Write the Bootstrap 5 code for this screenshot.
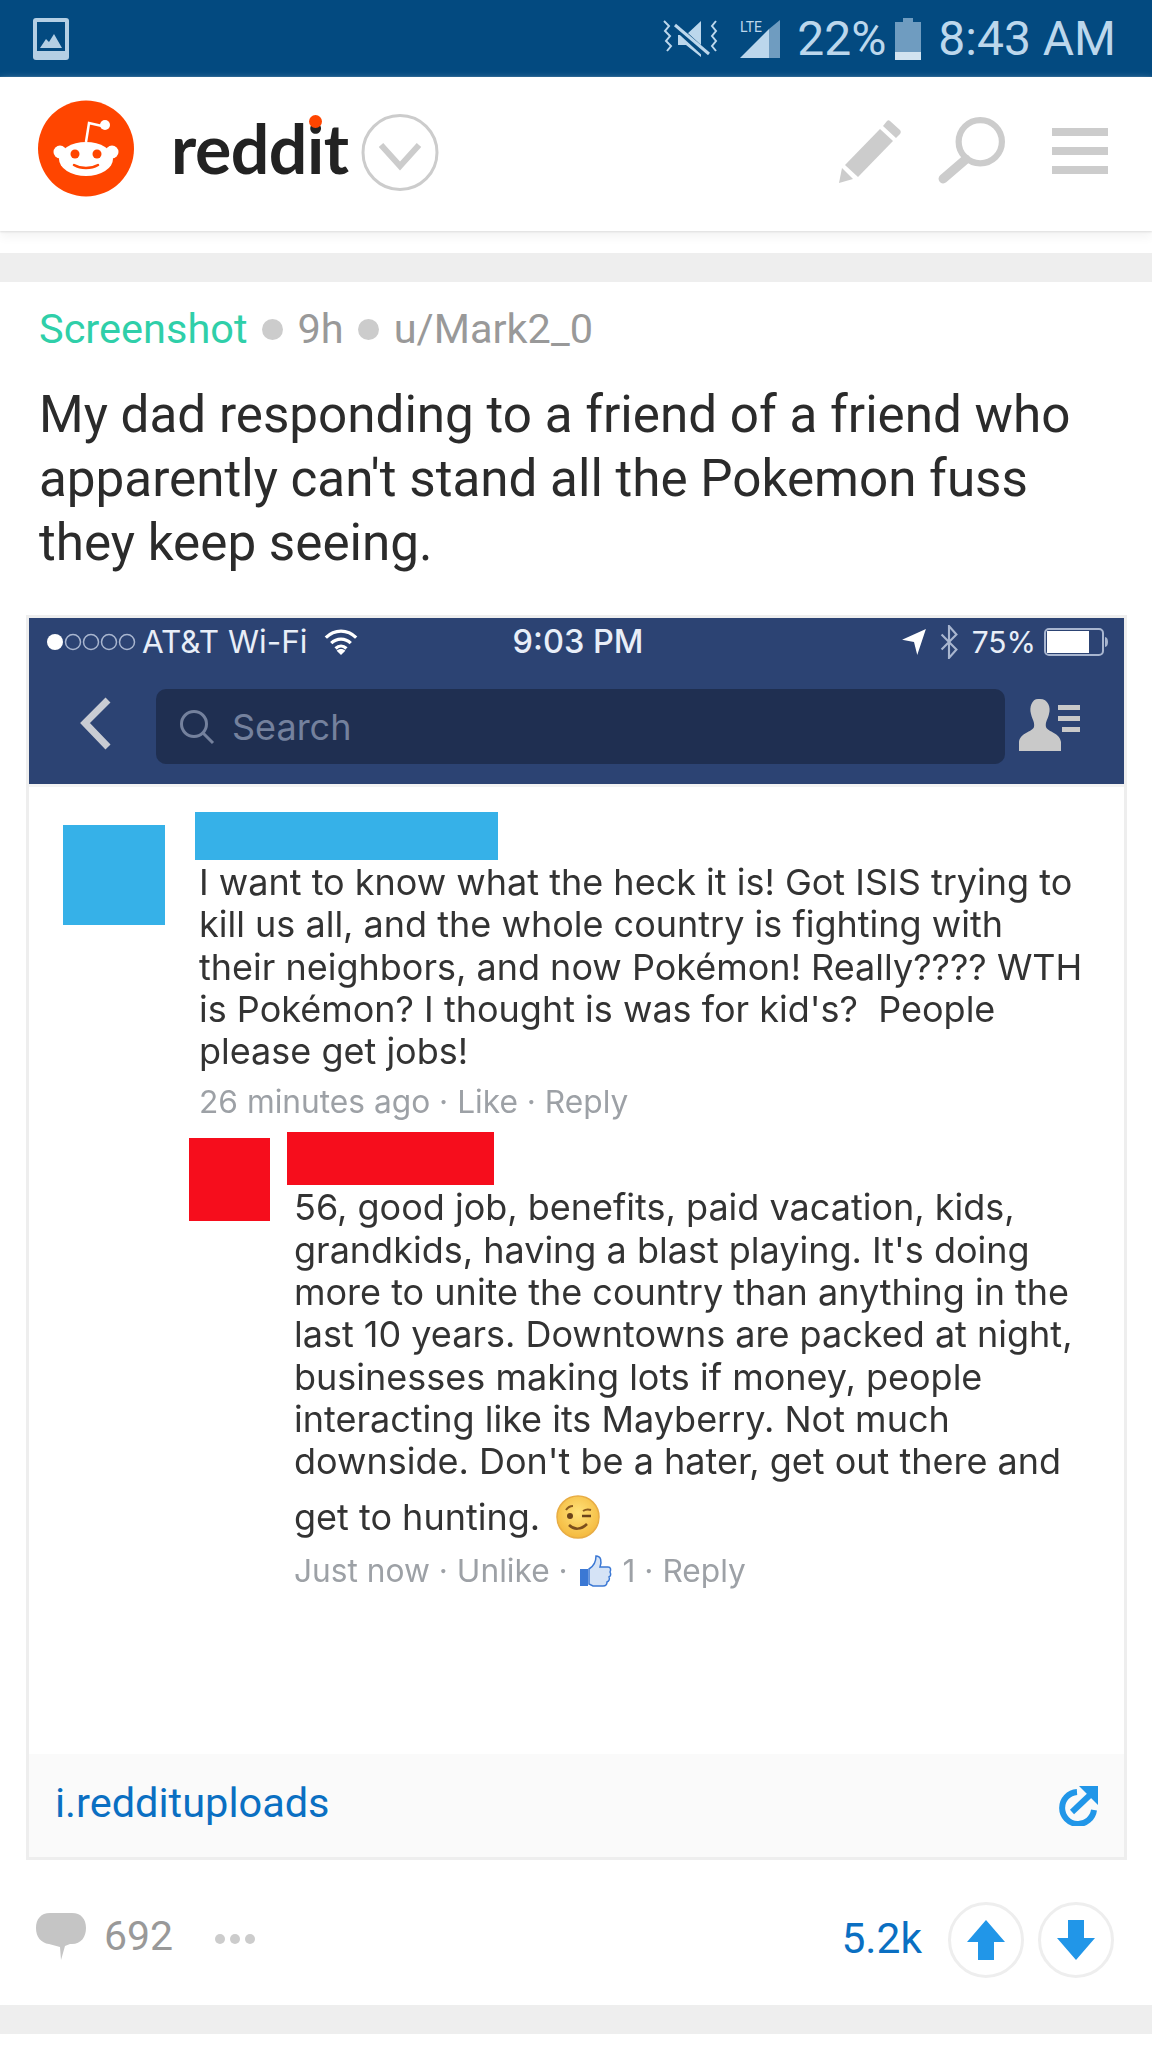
<!doctype html>
<html lang="en">
<head>
<meta charset="utf-8">
<title>reddit post</title>
<link href="https://cdn.jsdelivr.net/npm/bootstrap@5.3.0/dist/css/bootstrap.min.css" rel="stylesheet">
<style>
body{background:#fff;font-family:Roboto,"Liberation Sans",sans-serif;overflow-x:hidden}
.sys-bar{height:77px;background:#034a80;color:#bcd7ec;padding:0 36px 0 33px;font-size:48px;line-height:1}
.sys-icons{gap:17px}
.batt-ic{margin-left:-8px}
.signal-ic{margin-left:3px}
.app-head{height:154px;padding:0 44px 12px 38px;background:#fff;box-shadow:0 1px 2px #ddd,0 6px 10px #f4f4f4}
.wordmark{font-family:Lato,sans-serif;font-weight:700;font-size:68px;line-height:1;color:#222;margin-left:37px;letter-spacing:-.5px;position:relative}
.wm-dot{position:relative}
.wm-dot::after{content:"";position:absolute;left:50%;top:8px;width:13px;height:13px;margin-left:-6.5px;border-radius:50%;background:#ff4500}
.chev{margin-left:13px;margin-top:8px}
.head-tools{margin-top:6px}
.tool-search{margin:0 47px 0 36px}
.band{height:29px;background:#eee}
.gap-top{height:22px}
.post-meta{padding:23px 39px 0;font-size:41.500px;line-height:48px;color:#999;gap:14.500px}
.flair{color:#2fcfa9}
.sep{width:21px;height:21px;border-radius:50%;background:#ccc}
.post-title{margin:30px 39px 0;font-size:51.200px;line-height:64px;font-weight:400;color:#2b2b2b}
.shot-card{margin:40px 25px 0 26px;border:3px solid #eee;background:#fff}
.fb-bar{background:#2c4373;height:166px;color:#e8eef8;font-family:Inter,"Liberation Sans",sans-serif}
.fb-status{height:48px;padding:0 14px 0 17px;font-size:31.500px;line-height:1}
.fb-side{flex:1 1 0}
.fb-clock{font-size:32.500px;font-weight:500}
.fb-pct{font-size:30px;margin:0 8px 0 12px}
.fb-bt{margin-left:12px}
.fb-nav{padding:23px 0 0 50px}
.fb-search{width:849px;height:75px;margin-left:45px;background:#1f2f51;border-radius:10px;color:#74819d;font-size:36px;padding-left:23px;gap:17px}
.fb-person{margin-left:13px;margin-top:8px}
.fb-wrap{height:970px;padding-top:25px;border-top:3px solid #f3f3f3;font-family:Inter,"Liberation Sans",sans-serif;color:#333;filter:blur(.5px)}
.avatar-a{width:102px;height:100px;background:#36b1e8;margin:13px 0 0 34px;flex:none}
.name-a{width:303px;height:48px;background:#36b1e8;margin-left:-1px}
.c-text{font-size:36px;line-height:42.3px;margin:0}
.c-meta{font-size:31.700px;line-height:40px;color:#9da1a6;margin:0}
.body-a{margin-left:31px;width:900px}
.body-a .c-text{margin:1px 0 0 3px}
.body-a .c-meta{margin:10px 0 0 3px}
.reply-row{margin:10px 0 0 160px}
.avatar-b{width:81px;height:83px;background:#f60d1c;margin-top:6px;flex:none}
.name-b{width:207px;height:53px;background:#f60d1c}
.body-b{margin-left:17px;width:800px}
.body-b .c-text{margin:0 0 0 7px}
.body-b .c-text.first{margin-top:1px}
.body-b .c-last{margin:12px 0 0 7px;font-size:36px;line-height:42px;gap:16px}
.body-b .c-meta{margin:12px 0 0 7px}
.wink{width:44px;height:44px}
.like-ic{vertical-align:-5px;margin:0 2px}
.link-strip{height:103px;background:#fafafa;padding:0 26px 0 26px;color:#0a6fc2;font-size:41.500px}
.link-label{margin-bottom:5px}
.action-row{height:144.500px;padding:8px 38px 0 36px}
.count-a{font-size:41px;color:#999;margin-left:18px}
.dots-more{margin-left:42px;gap:5px;margin-top:6px}
.dots-more i{display:block;width:10px;height:10px;border-radius:50%;background:#ccc}
.count-b{font-size:42.500px;color:#0a6fc2;margin-right:12px;margin-top:6px}
.vote{width:76px;height:76px;border:3px solid #eee;border-radius:50%;margin-left:14px;margin-top:8px}
</style>
</head>
<body>
<div class="sys-bar d-flex align-items-center justify-content-between">
  <svg width="36" height="42" viewBox="0 0 36 42"><rect width="36" height="42" rx="3" fill="#b4cfe4"/><rect x="4" y="4" width="28" height="29" fill="#034a80"/><path d="M7 30l6-9 3 3 5-8 8 14z" fill="#b4cfe4"/></svg>
  <div class="sys-icons d-flex align-items-center">
    <svg width="58" height="42" viewBox="0 0 58 42"><path d="M2 3l5 5-4 5 5 5-4 5 5 5-4 5M54 3l-4 5 4 5-4 5 4 5-4 5 4 5" fill="none" stroke="#bcd7ec" stroke-width="2"/><path d="M16 17h8L39 3v36L24 27h-8z" fill="#bcd7ec"/><path d="M11 6l36 33" stroke="#034a80" stroke-width="7"/><path d="M13 7l34 29" stroke="#bcd7ec" stroke-width="3"/></svg>
    <svg class="signal-ic" width="40" height="42" viewBox="0 0 40 42"><path d="M40 2v38H29V11z" fill="#6f9cc0"/><path d="M29 11v29H0z" fill="#bcd7ec"/><text x="0" y="14" font-size="14" fill="#bcd7ec" font-family="Roboto,sans-serif">LTE</text></svg>
    <span>22%</span>
    <svg class="batt-ic" width="26" height="42" viewBox="0 0 26 42"><rect x="8" width="10" height="5" fill="#6f9cc0"/><rect y="4" width="26" height="38" fill="#6f9cc0"/><rect y="34" width="26" height="8" fill="#d2e3f0"/></svg>
    <span>8:43 AM</span>
  </div>
</div>

<div class="app-head d-flex align-items-center justify-content-between">
  <div class="d-flex align-items-center">
    <svg width="96" height="97" viewBox="0 0 96 97"><circle cx="48" cy="48.500" r="48" fill="#ff4500"/><circle cx="22" cy="52" r="6.500" fill="#fff"/><circle cx="74" cy="52" r="6.500" fill="#fff"/><ellipse cx="48" cy="59" rx="27" ry="17" fill="#fff"/><path d="M48 42l3-19 13 3" fill="none" stroke="#fff" stroke-width="2.500"/><circle cx="67" cy="25" r="5" fill="#fff"/><circle cx="37" cy="54" r="4.500" fill="#ff4500"/><circle cx="59" cy="54" r="4.500" fill="#ff4500"/><path d="M36 65c7 4 17 4 24 0" fill="none" stroke="#ff4500" stroke-width="2.500" stroke-linecap="round"/></svg>
    <span class="wordmark">redd<span class="wm-dot">i</span>t</span>
    <svg class="chev" width="78" height="79" viewBox="0 0 78 79"><circle cx="39" cy="39.500" r="37" fill="none" stroke="#ccc" stroke-width="3"/><path d="M20 32l19 21 19-21" fill="none" stroke="#ccc" stroke-width="6"/></svg>
  </div>
  <div class="head-tools d-flex align-items-center">
    <svg width="62" height="63" viewBox="0 0 62 63"><path d="M51 1l10 9c1 1 1 3 0 4l-4 4-13-12 4-5c1-1 2-1 3 0z" fill="#ccc"/><path d="M41 9l13 12-35 36-13-12z" fill="#ccc"/><path d="M3 48l11 11-14 4z" fill="#ccc"/></svg>
    <svg class="tool-search" width="68" height="68" viewBox="0 0 66 66"><circle cx="42" cy="24" r="21" fill="none" stroke="#ccc" stroke-width="6"/><path d="M28 41L6 60" stroke="#ccc" stroke-width="9" stroke-linecap="round"/></svg>
    <svg width="56" height="46" viewBox="0 0 56 46"><path d="M0 0h56v8H0zM0 19h56v8H0zM0 38h56v8H0z" fill="#ccc"/></svg>
  </div>
</div>
<div class="gap-top"></div>
<div class="band"></div>

<div class="post-meta d-flex align-items-center">
  <span class="flair">Screenshot</span><span class="sep"></span><span>9h</span><span class="sep"></span><span>u/Mark2_0</span>
</div>
<h1 class="post-title">My dad responding to a friend of a friend who apparently can't stand all the Pokemon fuss they keep seeing.</h1>

<div class="shot-card">
  <div class="fb-bar">
    <div class="fb-status d-flex align-items-center justify-content-between">
      <div class="fb-side d-flex align-items-center">
        <svg width="92" height="18" viewBox="0 0 92 18"><circle cx="9" cy="9" r="8" fill="#fff"/><g fill="none" stroke="#a9b6cf" stroke-width="1.500"><circle cx="27" cy="9" r="7.500"/><circle cx="45" cy="9" r="7.500"/><circle cx="63" cy="9" r="7.500"/><circle cx="81" cy="9" r="7.500"/></g></svg>
        <span class="ms-1">AT&amp;T Wi-Fi</span>
        <svg class="ms-3" width="36" height="26" viewBox="0 0 32 24"><path d="M2 8c8-8 20-8 28 0M7 13c5-5 13-5 18 0M11 18c3-3 7-3 10 0" fill="none" stroke="#fff" stroke-width="3"/><path d="M16 24l-4-4c2-2 6-2 8 0z" fill="#fff"/></svg>
      </div>
      <span class="fb-clock">9:03 PM</span>
      <div class="fb-side d-flex align-items-center justify-content-end">
        <svg width="24" height="26" viewBox="0 0 22 24"><path d="M22 0L0 10l11 2 3 12z" fill="#fff"/></svg>
        <svg class="fb-bt" width="22" height="34" viewBox="0 0 20 32"><path d="M3 9l14 14-7 8V1l7 8L3 23" fill="none" stroke="#a9b6cf" stroke-width="2"/></svg>
        <span class="fb-pct">75%</span>
        <svg width="66" height="28" viewBox="0 0 66 28"><rect x="1" y="1" width="58" height="26" rx="4" fill="none" stroke="#a9b6cf" stroke-width="2"/><rect x="3" y="3" width="42" height="22" fill="#fff"/><path d="M61 9c4 0 4 10 0 10z" fill="#a9b6cf"/></svg>
      </div>
    </div>
    <div class="fb-nav d-flex">
      <svg class="mt-2" width="32" height="53" viewBox="0 0 32 53"><path d="M29 3L6 26l23 24" fill="none" stroke="#c9ccd3" stroke-width="7"/></svg>
      <div class="fb-search d-flex align-items-center">
        <svg width="36" height="36" viewBox="0 0 36 36"><circle cx="15" cy="15" r="12.500" fill="none" stroke="#74819d" stroke-width="3"/><path d="M24 24l10 10" stroke="#74819d" stroke-width="3"/></svg>
        <span>Search</span>
      </div>
      <svg class="fb-person" width="62" height="54" viewBox="0 0 62 54"><path d="M22 2c8 0 11 8 9 15-1 5-4 8-3 13 2 5 14 6 15 15v9H1v-9c1-9 13-10 15-15 1-5-2-8-3-13-2-7 1-15 7-15z" fill="#c9c9c9"/><path d="M40 8h22v5H40zM40 19h22v5H40zM44 30h18v5H44z" fill="#c9c9c9"/></svg>
    </div>
  </div>
  <div class="fb-wrap">
    <div class="d-flex">
      <div class="avatar-a"></div>
      <div class="body-a">
        <div class="name-a"></div>
        <p class="c-text">I want to know what the heck it is! Got ISIS trying to<br>kill us all, and the whole country is fighting with<br>their neighbors, and now Pokémon! Really???? WTH<br>is Pokémon? I thought is was for kid's?&nbsp; People<br>please get jobs!</p>
        <p class="c-meta">26 minutes ago · Like · Reply</p>
      </div>
    </div>
    <div class="reply-row d-flex">
      <div class="avatar-b"></div>
      <div class="body-b">
        <div class="name-b"></div>
        <p class="c-text first">56, good job, benefits, paid vacation, kids,<br>grandkids, having a blast playing. It's doing<br>more to unite the country than anything in the<br>last 10 years. Downtowns are packed at night,<br>businesses making lots if money, people<br>interacting like its Mayberry. Not much<br>downside. Don't be a hater, get out there and</p>
        <div class="c-last d-flex align-items-center">
          <span>get to hunting.</span>
          <svg class="wink" viewBox="0 0 44 44"><defs><radialGradient id="wg" cx=".5" cy=".4" r=".6"><stop offset="0" stop-color="#ffe27a"/><stop offset="1" stop-color="#f4b93e"/></radialGradient></defs><circle cx="22" cy="22" r="21" fill="url(#wg)" stroke="#e8ad45" stroke-width="1.500"/><path d="M10 15c2-3 4-4 7-4M27 16c3-2 5-2 8-1" fill="none" stroke="#8a5a1e" stroke-width="2"/><circle cx="14" cy="21" r="3" fill="#6b431a"/><path d="M26 21h9" stroke="#6b431a" stroke-width="2.500"/><path d="M13 30c5 5 12 5 18-1" fill="none" stroke="#7c4e1c" stroke-width="2.500"/></svg>
        </div>
        <p class="c-meta">Just now · Unlike · <svg class="like-ic" width="33" height="32" viewBox="0 0 33 32"><path d="M1 14h8v17H1z" fill="#3b78d4"/><path d="M10 14c5-3 7-7 7-13 5 0 6 5 4 11h8c3 0 3 3 2 5 1 2 1 4-1 5 1 2 0 4-2 5 0 2-1 4-4 4H14l-4-2z" fill="#d5e3f6" stroke="#3b78d4" stroke-width="1.500"/></svg> 1 · Reply</p>
      </div>
    </div>
  </div>
  <div class="link-strip d-flex align-items-center justify-content-between">
    <span class="link-label">i.reddituploads</span>
    <svg width="40" height="40" viewBox="0 0 40 40"><path d="M19 6a16 16 0 1 0 17 18" fill="none" stroke="#2196e8" stroke-width="6"/><path d="M14 26L32 9" stroke="#2196e8" stroke-width="6"/><path d="M21 0h19v19z" fill="#2196e8"/></svg>
  </div>
</div>

<div class="action-row d-flex align-items-center justify-content-between">
  <div class="d-flex align-items-center">
    <svg width="50" height="47" viewBox="0 0 50 47"><path d="M14 0h22c9 0 14 6 14 15s-5 16-14 16h-2l-5 2-4 14-1-13-11-3C5 30 0 24 0 15S5 0 14 0z" fill="#c5c5c5"/></svg>
    <span class="count-a">692</span>
    <span class="dots-more d-flex"><i></i><i></i><i></i></span>
  </div>
  <div class="d-flex align-items-center">
    <span class="count-b">5.2k</span>
    <span class="vote d-flex align-items-center justify-content-center"><svg width="38" height="40" viewBox="0 0 38 40"><path d="M19 0l19 22H27v18H11V22H0z" fill="#2196e8"/></svg></span>
    <span class="vote d-flex align-items-center justify-content-center"><svg width="38" height="40" viewBox="0 0 38 40"><path d="M19 40L0 18h11V0h16v18h11z" fill="#2196e8"/></svg></span>
  </div>
</div>
<div class="band"></div>
</body>
</html>
